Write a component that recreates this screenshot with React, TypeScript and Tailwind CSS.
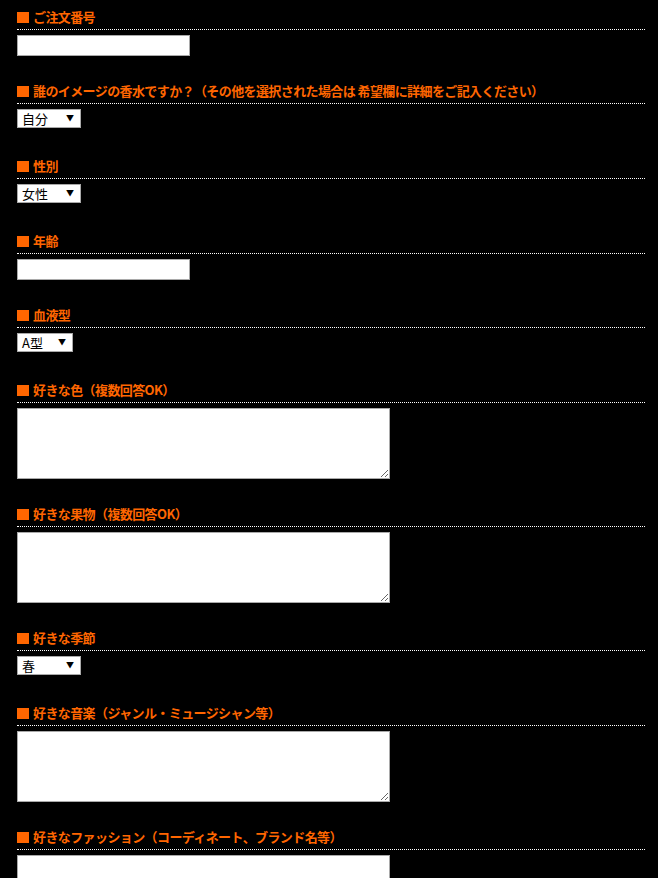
import React from "react";

type Field =
  | { kind: "input"; label: string }
  | { kind: "select"; label: string; value: string; width: string }
  | { kind: "textarea"; label: string };

const fields: Field[] = [
  { kind: "input", label: "ご注文番号" },
  {
    kind: "select",
    label: "誰のイメージの香水ですか？（その他を選択された場合は 希望欄に詳細をご記入ください）",
    value: "自分",
    width: "w-[64px]",
  },
  { kind: "select", label: "性別", value: "女性", width: "w-[64px]" },
  { kind: "input", label: "年齢" },
  { kind: "select", label: "血液型", value: "A型", width: "w-[56px]" },
  { kind: "textarea", label: "好きな色（複数回答OK）" },
  { kind: "textarea", label: "好きな果物（複数回答OK）" },
  { kind: "select", label: "好きな季節", value: "春", width: "w-[64px]" },
  { kind: "textarea", label: "好きな音楽（ジャンル・ミュージシャン等）" },
  { kind: "textarea", label: "好きなファッション（コーディネート、ブランド名等）" },
];

const font = "font-['MS_PGothic','Noto_Sans_CJK_JP',sans-serif]";

function Heading({ label }: { label: string }) {
  return (
    <div className="flex items-center border-b border-dotted border-white pb-[3px] text-[13px] leading-[18px] font-bold tracking-[-0.6px] text-[#ff6600]">
      <span className="mr-[4px] inline-block h-[11px] w-[12px] bg-[#ff6600]" />
      <span>{label}</span>
    </div>
  );
}

function Control({ field }: { field: Field }) {
  if (field.kind === "input") {
    return (
      <input
        type="text"
        className="block h-[21px] w-[173px] border border-[#a9a9a9] bg-white outline-none"
      />
    );
  }
  if (field.kind === "textarea") {
    return (
      <textarea className="block h-[71px] w-[373px] border border-[#a9a9a9] bg-white outline-none" />
    );
  }
  return (
    <div className="h-[22px]">
      <div className={`relative h-[19px] ${field.width} border border-[#a9a9a9] bg-white`}>
        <span className="absolute left-[4px] top-0 text-[13px] leading-[17px] text-black">{field.value}</span>
        <span className="absolute right-[6px] top-[1px] text-[8px] leading-[13px] text-black">▼</span>
      </div>
    </div>
  );
}

export default function App() {
  return (
    <div className={`min-h-[878px] bg-black pl-[17px] pr-[13px] pt-[8px] ${font}`}>
      {fields.map((f, i) => (
        <div key={i} className="mb-[26px]">
          <Heading label={f.label} />
          <div className="mt-[5px]">
            <Control field={f} />
          </div>
        </div>
      ))}
    </div>
  );
}
